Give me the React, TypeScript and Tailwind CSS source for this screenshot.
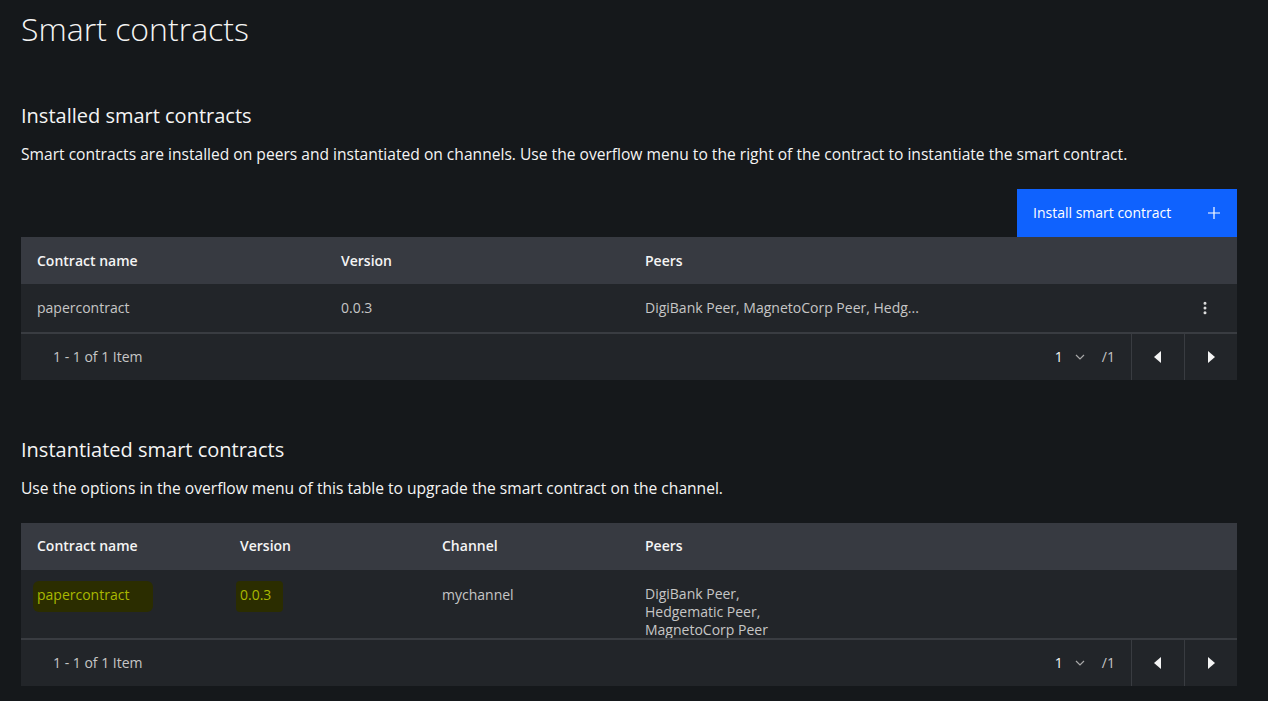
import { MoreVertical } from 'lucide-react';

const font = { fontFamily: '"Open Sans", "Liberation Sans", sans-serif' };

function Caret({ dir }: { dir: 'left' | 'right' }) {
  return (
    <svg width="8" height="12" viewBox="0 0 8 12" fill="#f4f4f4">
      {dir === 'left' ? <path d="M7 0v12L0 6z" /> : <path d="M1 0v12l7-6z" />}
    </svg>
  );
}

function Pagination() {
  return (
    <div className="flex h-12 items-center border-t-2 border-[#393c41] bg-[#222529] text-sm text-[#c6c6c6]">
      <div className="flex-1 pl-8">1 - 1 of 1 Item</div>
      <div className="flex items-center pr-4">
        <span className="text-[#f4f4f4]">1</span>
        <svg className="ml-3" width="10" height="6" viewBox="0 0 10 6" fill="none" stroke="#a8a8a8" strokeWidth="1.2">
          <path d="M1 1l4 4 4-4" />
        </svg>
        <span className="ml-[17px]">/1</span>
      </div>
      <button className="flex h-full w-[53px] items-center justify-center border-l border-[#393c41]">
        <Caret dir="left" />
      </button>
      <button className="flex h-full w-[53px] items-center justify-center border-l border-[#393c41]">
        <Caret dir="right" />
      </button>
    </div>
  );
}

function InstalledTable() {
  return (
    <div className="text-sm">
      <div className="grid h-[47px] grid-cols-[304px_304px_1fr_64px] items-center bg-[#373a41] font-semibold text-[#f4f4f4]">
        <div className="pl-4">Contract name</div>
        <div className="pl-4">Version</div>
        <div className="pl-4">Peers</div>
        <div />
      </div>
      <div className="grid h-12 grid-cols-[304px_304px_1fr_64px] items-center bg-[#222529] text-[#c6c6c6]">
        <div className="pl-4">papercontract</div>
        <div className="pl-4">0.0.3</div>
        <div className="pl-4">DigiBank Peer, MagnetoCorp Peer, Hedg...</div>
        <div className="flex justify-center">
          <MoreVertical size={16} color="#e0e0e0" strokeWidth={2.5} />
        </div>
      </div>
      <Pagination />
    </div>
  );
}

function InstantiatedTable() {
  return (
    <div className="text-sm">
      <div className="grid h-[47px] grid-cols-[203px_202px_203px_1fr] items-center bg-[#373a41] font-semibold text-[#f4f4f4]">
        <div className="pl-4">Contract name</div>
        <div className="pl-4">Version</div>
        <div className="pl-4">Channel</div>
        <div className="pl-4">Peers</div>
      </div>
      <div className="grid h-[68px] grid-cols-[203px_202px_203px_1fr] items-start overflow-hidden bg-[#222529] pt-[15px] text-[#c6c6c6]">
        <div className="pl-4">
          <span className="-ml-1 rounded-md bg-[#2b2d00] pb-2 pl-1 pr-6 pt-1 text-[#a9b800]">papercontract</span>
        </div>
        <div className="pl-4">
          <span className="-ml-1 rounded-sm bg-[#2b2d00] pb-2 pl-1 pr-3 pt-1 text-[#a9b800]">0.0.3</span>
        </div>
        <div className="pl-4">mychannel</div>
        <div className="pl-4 leading-[18px]">
          DigiBank Peer,
          <br />
          Hedgematic Peer,
          <br />
          MagnetoCorp Peer
        </div>
      </div>
      <Pagination />
    </div>
  );
}

export default function App() {
  return (
    <div className="min-h-screen bg-[#15181b] pl-[21px] pr-[31px] pt-[9px] text-[#f4f4f4]" style={font}>
      <h1 className="text-[32px] font-light leading-10">Smart contracts</h1>

      <section className="mt-[53px]">
        <h2 className="text-xl leading-7">Installed smart contracts</h2>
        <p className="mt-[13px] text-[15.6px]">
          Smart contracts are installed on peers and instantiated on channels. Use the overflow menu to the right of the contract to instantiate the smart contract.
        </p>
        <div className="mt-[23px] flex justify-end">
          <button className="flex h-12 w-[220px] items-center justify-between bg-[#0f62fe] pl-4 pr-4 text-sm text-white">
            Install smart contract
            <svg width="14" height="14" viewBox="0 0 14 14" stroke="#fff" strokeWidth="1.2">
              <path d="M7 1v12M1 7h12" />
            </svg>
          </button>
        </div>
        <InstalledTable />
      </section>

      <section className="mt-[56px]">
        <h2 className="text-xl leading-7">Instantiated smart contracts</h2>
        <p className="mt-[13px] text-[15.6px]">
          Use the options in the overflow menu of this table to upgrade the smart contract on the channel.
        </p>
        <div className="mt-[22px]">
          <InstantiatedTable />
        </div>
      </section>
    </div>
  );
}
